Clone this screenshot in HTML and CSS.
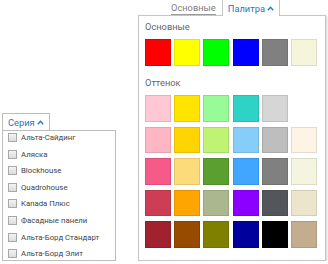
FILE: index.html
```html
<!DOCTYPE html>
<html lang="ru">
<head>
    <meta charset="UTF-8">
    <title>Фильтр</title>
    <link rel="stylesheet" href="styles.css">
</head>
<body>
    <div class="page">
        <div class="series">
            <div class="series-tab">Серия <svg class="chevron" width="7" height="5" viewBox="0 0 7 5"><polyline points="0.8,4.2 3.5,1.3 6.2,4.2"/></svg></div>
            <div class="series-list">
                <label class="item"><span class="box"></span>Альта-Сайдинг</label>
                <label class="item"><span class="box"></span>Аляска</label>
                <label class="item"><span class="box"></span>Blockhouse</label>
                <label class="item"><span class="box"></span>Quadrohouse</label>
                <label class="item"><span class="box"></span>Kanada Плюс</label>
                <label class="item"><span class="box"></span>Фасадные панели</label>
                <label class="item"><span class="box"></span>Альта-Борд Стандарт</label>
                <label class="item"><span class="box"></span>Альта-Борд Элит</label>
            </div>
        </div>

        <div class="palette">
            <div class="tabs">
                <span class="tab-plain">Основные</span>
                <span class="tab-active">Палитра <svg class="chevron" width="7" height="5" viewBox="0 0 7 5"><polyline points="0.8,4.2 3.5,1.3 6.2,4.2"/></svg></span>
            </div>
            <div class="palette-body">
                <div class="heading">Основные</div>
                <div class="swatches">
                    <span class="sw" style="background:#ff0000"></span>
                    <span class="sw" style="background:#ffff00"></span>
                    <span class="sw" style="background:#00ff00"></span>
                    <span class="sw" style="background:#0000ff"></span>
                    <span class="sw" style="background:#808080"></span>
                    <span class="sw" style="background:#f5f5dc"></span>
                </div>
                <div class="heading second">Оттенок</div>
                <div class="swatches">
                    <span class="sw" style="background:#ffc8d4"></span>
                    <span class="sw" style="background:#ffe400"></span>
                    <span class="sw" style="background:#98fb98"></span>
                    <span class="sw" style="background:#2ed3c6"></span>
                    <span class="sw" style="background:#d6d6d6"></span>
                    <span></span>

                    <span class="sw" style="background:#ffb6c4"></span>
                    <span class="sw" style="background:#ffd500"></span>
                    <span class="sw" style="background:#bff374"></span>
                    <span class="sw" style="background:#87cdf9"></span>
                    <span class="sw" style="background:#bebebe"></span>
                    <span class="sw" style="background:#fdf4e6"></span>

                    <span class="sw" style="background:#f55a89"></span>
                    <span class="sw" style="background:#fcdc7a"></span>
                    <span class="sw" style="background:#5b9f30"></span>
                    <span class="sw" style="background:#40a6ff"></span>
                    <span class="sw" style="background:#808080"></span>
                    <span class="sw" style="background:#f4f4e0"></span>

                    <span class="sw" style="background:#cb3e53"></span>
                    <span class="sw" style="background:#ffa500"></span>
                    <span class="sw" style="background:#abb78e"></span>
                    <span class="sw" style="background:#8b00ff"></span>
                    <span class="sw" style="background:#53575b"></span>
                    <span class="sw" style="background:#ebe6cb"></span>

                    <span class="sw" style="background:#a1222f"></span>
                    <span class="sw" style="background:#964b00"></span>
                    <span class="sw" style="background:#808000"></span>
                    <span class="sw" style="background:#00009c"></span>
                    <span class="sw" style="background:#000000"></span>
                    <span class="sw" style="background:#c4ad8e"></span>
                </div>
            </div>
        </div>
    </div>
</body>
</html>
```

FILE: styles.css
```css
body {
    margin: 0;
    padding: 0;
    font-family: Roboto, 'Liberation Sans', Arial, sans-serif;
    background: #fff;
    color: #333;
}
.page {
    display: flex;
    align-items: flex-start;
    padding-left: 2px;
    gap: 22px;
}

/* series dropdown */
.series {
    margin-top: 111px;
    width: 114px;
}
.series-tab {
    display: inline-flex;
    align-items: center;
    gap: 2px;
    height: 17px;
    width: 48px;
    padding: 1px 0 0 5px;
    border: 1px solid #bdbdbd;
    border-bottom: none;
    background: #fff;
    color: #2378c3;
    font-size: 9.3px;
    position: relative;
    margin-bottom: -1px;
    box-sizing: border-box;
}
.chevron polyline {
    fill: none;
    stroke: #2378c3;
    stroke-width: 1.4;
}
.series-list {
    border: 1px solid #bdbdbd;
    display: flex;
    flex-direction: column;
    gap: 3.67px;
    padding: 0.5px 0 0 4px;
    height: 131px;
    box-sizing: border-box;
}
.item {
    display: flex;
    align-items: center;
    gap: 4px;
    height: 13px;
    font-size: 7.8px;
    color: #444;
}
.box {
    width: 7px;
    height: 7px;
    border: 1px solid #a8a8a8;
    background: linear-gradient(#f4f4f4, #dcdcdc);
    margin-left: 1px;
}

/* palette dropdown */
.palette {
    width: 188px;
}
.tabs {
    display: flex;
    align-items: flex-start;
    height: 16px;
    padding-left: 33px;
    gap: 6px;
    font-size: 9.3px;
    margin-bottom: -1px;
    position: relative;
}
.tab-plain {
    color: #808080;
    border-bottom: 1px solid #9a9a9a;
    line-height: 13px;
    margin-top: 1px;
}
.tab-active {
    display: inline-flex;
    align-items: center;
    gap: 2px;
    height: 17px;
    width: 58px;
    margin-top: -1px;
    padding: 0 0 0 5px;
    border: 1px solid #c6c6c6;
    border-bottom: none;
    background: #fff;
    color: #2378c3;
    box-sizing: border-box;
}
.palette-body {
    border: 1px solid #c6c6c6;
    box-shadow: 1px 1px 2px rgba(0, 0, 0, 0.18);
    padding: 5px 0 12.5px 6px;
}
.heading {
    font-size: 9.3px;
    line-height: 12px;
    color: #666;
    margin-bottom: 6px;
}
.heading.second {
    margin-top: 11.5px;
}
.swatches {
    display: grid;
    grid-template-columns: repeat(6, 26px);
    grid-auto-rows: 26.5px;
    column-gap: 3.2px;
    row-gap: 5px;
}
.sw {
    box-shadow: inset 0 0 0 1px rgba(0, 0, 0, 0.1), 0 0 0 1px rgba(255, 255, 255, 0.6);
}
```
